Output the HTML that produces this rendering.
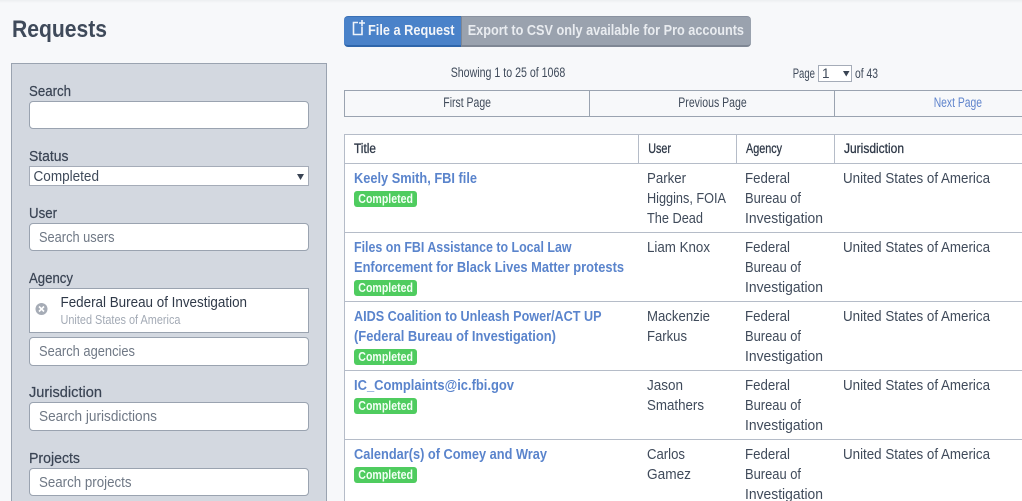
<!DOCTYPE html>
<html><head><meta charset="utf-8"><title>Requests</title>
<style>
html,body{margin:0;padding:0;width:1022px;height:501px;overflow:hidden;background:#f7f8fa}
body{position:relative;font-family:"Liberation Sans",sans-serif}
.b{position:absolute;box-sizing:border-box}
.in{left:29px;width:280px;background:#fff;border:1px solid #9aa3b0;border-radius:4px}
.bd{left:354px;width:63px;height:16px;background:#4fcc5f;border-radius:3px}
svg.t{position:absolute;left:0;top:0}
text{font-family:"Liberation Sans",sans-serif;font-size:14.5px;fill:#3f4a5a}
.lb{font-size:14.5px;fill:#3a4454;stroke:#3a4454;stroke-width:.2}
.ph{font-size:14.5px;fill:#6f7885}
.sm{font-size:13.5px;fill:#3f4a5a}
.th{font-size:13.5px;fill:#2f3948;stroke:#2f3948;stroke-width:.3}
.a{font-size:14.5px;font-weight:bold;fill:#5a84cc}
.c{font-size:12.5px;font-weight:bold;fill:#f2fff4}
.w{font-size:14.5px;font-weight:bold;fill:#f3f5f9}
</style></head><body>
<div class="b" style="left:0;top:0;width:1022px;height:3px;background:linear-gradient(#eceef1,#f7f8fa)"></div>

<div class="b" style="left:11px;top:63px;width:316px;height:450px;background:#d3d8e0;border:1px solid #9aa3b0"></div>
<div class="b in" style="top:101px;height:28px"></div>
<div class="b" style="left:29px;top:166px;width:280px;height:20px;background:#fff;border:1px solid #a5acb8"></div>
<div class="b in" style="top:223px;height:28px"></div>
<div class="b" style="left:29px;top:288px;width:280px;height:45px;background:#fff;border:1px solid #9aa3b0"></div>
<div class="b in" style="top:337px;height:29px"></div>
<div class="b in" style="top:402px;height:29px"></div>
<div class="b in" style="top:468px;height:28px"></div>

<div class="b" style="left:344px;top:16px;width:118px;height:31px;background:#4a82c9;border-bottom:2px solid #2f66ab;border-top:1px solid #3a70b5;border-radius:4px 0 0 4px"></div>
<div class="b" style="left:461px;top:16px;width:290px;height:31px;background:#9aa2ae;border-bottom:2px solid #7f8794;border-top:1px solid #8a92a0;border-left:1px solid #7f8794;border-radius:0 4px 4px 0"></div>

<div class="b" style="left:818px;top:65px;width:34px;height:17px;background:#fff;border:1px solid #a5acb8"></div>

<div class="b" style="left:344px;top:90px;width:760px;height:27px;border:1px solid #9aa3b0;background:#f7f8fa"></div>
<div class="b" style="left:589px;top:90px;width:1px;height:27px;background:#9aa3b0"></div>
<div class="b" style="left:834px;top:90px;width:1px;height:27px;background:#9aa3b0"></div>

<div class="b" style="left:344px;top:134px;width:760px;height:380px;background:#fff;border:1px solid #b5bcc8"></div>
<div class="b" style="left:344px;top:163px;width:760px;height:1px;background:#b5bcc8"></div>
<div class="b" style="left:344px;top:232px;width:760px;height:1px;background:#b5bcc8"></div>
<div class="b" style="left:344px;top:301px;width:760px;height:1px;background:#b5bcc8"></div>
<div class="b" style="left:344px;top:370px;width:760px;height:1px;background:#b5bcc8"></div>
<div class="b" style="left:344px;top:439px;width:760px;height:1px;background:#b5bcc8"></div>
<div class="b" style="left:638px;top:134px;width:1px;height:29px;background:#b5bcc8"></div>
<div class="b" style="left:736px;top:134px;width:1px;height:29px;background:#b5bcc8"></div>
<div class="b" style="left:834px;top:134px;width:1px;height:29px;background:#b5bcc8"></div>

<div class="b bd" style="top:191px"></div>
<div class="b bd" style="top:280px"></div>
<div class="b bd" style="top:349px"></div>
<div class="b bd" style="top:398px"></div>
<div class="b bd" style="top:467px"></div>

<svg class="t" width="1022" height="501" viewBox="0 0 1022 501">
<text x="12" y="37" textLength="95" lengthAdjust="spacingAndGlyphs" style="font-size:24px;font-weight:bold;fill:#3f4a5a">Requests</text>

<text class="lb" x="29" y="96" textLength="42" lengthAdjust="spacingAndGlyphs">Search</text>
<text class="lb" x="29" y="161" textLength="39.5" lengthAdjust="spacingAndGlyphs">Status</text>
<text class="lb" x="29" y="218" textLength="28" lengthAdjust="spacingAndGlyphs">User</text>
<text class="lb" x="29" y="283" textLength="44" lengthAdjust="spacingAndGlyphs">Agency</text>
<text class="lb" x="29" y="397" textLength="73" lengthAdjust="spacingAndGlyphs">Jurisdiction</text>
<text class="lb" x="29" y="463" textLength="51" lengthAdjust="spacingAndGlyphs">Projects</text>

<text x="33.5" y="181" textLength="65.5" lengthAdjust="spacingAndGlyphs">Completed</text>
<path d="M297 174h7l-3.500 6z" fill="#3a4454"/>
<text class="ph" x="39" y="242" textLength="75.500" lengthAdjust="spacingAndGlyphs">Search users</text>
<text class="ph" x="39" y="356" textLength="96" lengthAdjust="spacingAndGlyphs">Search agencies</text>
<text class="ph" x="39" y="421" textLength="118" lengthAdjust="spacingAndGlyphs">Search jurisdictions</text>
<text class="ph" x="39" y="487" textLength="92.500" lengthAdjust="spacingAndGlyphs">Search projects</text>

<circle cx="41.500" cy="309" r="6" fill="#a6acb6"/>
<path d="M39 306.500l5 5M44 306.500l-5 5" stroke="#fff" stroke-width="1.600"/>
<text x="60.500" y="307" textLength="186.500" lengthAdjust="spacingAndGlyphs" style="fill:#2f3948">Federal Bureau of Investigation</text>
<text x="60.500" y="324" textLength="120" lengthAdjust="spacingAndGlyphs" style="font-size:12.500px;fill:#a3aab5">United States of America</text>

<path d="M358 22.500h-4.500v12h8.500v-8" fill="none" stroke="#eef3fa" stroke-width="1.600"/>
<path d="M362 20v6M359 23h6" fill="none" stroke="#eef3fa" stroke-width="1.600"/>
<text class="w" x="368" y="35" textLength="86.500" lengthAdjust="spacingAndGlyphs">File a Request</text>
<text class="w" x="467.700" y="35" textLength="276.300" lengthAdjust="spacingAndGlyphs" style="fill:#e9ecf0">Export to CSV only available for Pro accounts</text>

<text class="sm" x="450.700" y="77" textLength="114.600" lengthAdjust="spacingAndGlyphs">Showing 1 to 25 of 1068</text>
<text class="sm" x="792.700" y="78" textLength="22.300" lengthAdjust="spacingAndGlyphs">Page</text>
<text class="sm" x="822" y="78">1</text>
<path d="M843 71h6.500l-3.250 5.500z" fill="#3a4454"/>
<text class="sm" x="855" y="78" textLength="23" lengthAdjust="spacingAndGlyphs">of 43</text>

<text class="sm" x="443.300" y="107" textLength="47.700" lengthAdjust="spacingAndGlyphs">First Page</text>
<text class="sm" x="678.300" y="107" textLength="68.400" lengthAdjust="spacingAndGlyphs">Previous Page</text>
<text class="sm" x="933.700" y="107" textLength="48.300" lengthAdjust="spacingAndGlyphs" style="fill:#5f84cc">Next Page</text>

<text class="th" x="354" y="153" textLength="22" lengthAdjust="spacingAndGlyphs">Title</text>
<text class="th" x="648.300" y="153" textLength="22.700" lengthAdjust="spacingAndGlyphs">User</text>
<text class="th" x="746" y="153" textLength="36" lengthAdjust="spacingAndGlyphs">Agency</text>
<text class="th" x="844" y="153" textLength="60" lengthAdjust="spacingAndGlyphs">Jurisdiction</text>

<text class="a" x="354" y="183" textLength="123" lengthAdjust="spacingAndGlyphs">Keely Smith, FBI file</text>
<text class="a" x="354" y="252" textLength="217.500" lengthAdjust="spacingAndGlyphs">Files on FBI Assistance to Local Law</text>
<text class="a" x="354" y="272" textLength="270" lengthAdjust="spacingAndGlyphs">Enforcement for Black Lives Matter protests</text>
<text class="a" x="354" y="321" textLength="247.500" lengthAdjust="spacingAndGlyphs">AIDS Coalition to Unleash Power/ACT UP</text>
<text class="a" x="354" y="341" textLength="202" lengthAdjust="spacingAndGlyphs">(Federal Bureau of Investigation)</text>
<text class="a" x="354" y="390" textLength="160" lengthAdjust="spacingAndGlyphs">IC_Complaints@ic.fbi.gov</text>
<text class="a" x="354" y="459" textLength="193" lengthAdjust="spacingAndGlyphs">Calendar(s) of Comey and Wray</text>

<text class="c" x="358.300" y="203" textLength="54.700" lengthAdjust="spacingAndGlyphs">Completed</text>
<text class="c" x="358.300" y="292" textLength="54.700" lengthAdjust="spacingAndGlyphs">Completed</text>
<text class="c" x="358.300" y="361" textLength="54.700" lengthAdjust="spacingAndGlyphs">Completed</text>
<text class="c" x="358.300" y="410" textLength="54.700" lengthAdjust="spacingAndGlyphs">Completed</text>
<text class="c" x="358.300" y="479" textLength="54.700" lengthAdjust="spacingAndGlyphs">Completed</text>

<text x="647" y="183" textLength="39" lengthAdjust="spacingAndGlyphs">Parker</text>
<text x="647" y="203" textLength="79" lengthAdjust="spacingAndGlyphs">Higgins, FOIA</text>
<text x="647" y="223" textLength="56" lengthAdjust="spacingAndGlyphs">The Dead</text>
<text x="647" y="252" textLength="63" lengthAdjust="spacingAndGlyphs">Liam Knox</text>
<text x="647" y="321" textLength="63" lengthAdjust="spacingAndGlyphs">Mackenzie</text>
<text x="647" y="341" textLength="40" lengthAdjust="spacingAndGlyphs">Farkus</text>
<text x="647" y="390" textLength="36" lengthAdjust="spacingAndGlyphs">Jason</text>
<text x="647" y="410" textLength="57" lengthAdjust="spacingAndGlyphs">Smathers</text>
<text x="647" y="459" textLength="38" lengthAdjust="spacingAndGlyphs">Carlos</text>
<text x="647" y="479" textLength="44" lengthAdjust="spacingAndGlyphs">Gamez</text>

<text x="745" y="183" textLength="45" lengthAdjust="spacingAndGlyphs">Federal</text>
<text x="745" y="203" textLength="56" lengthAdjust="spacingAndGlyphs">Bureau of</text>
<text x="745" y="223" textLength="78" lengthAdjust="spacingAndGlyphs">Investigation</text>
<text x="745" y="252" textLength="45" lengthAdjust="spacingAndGlyphs">Federal</text>
<text x="745" y="272" textLength="56" lengthAdjust="spacingAndGlyphs">Bureau of</text>
<text x="745" y="292" textLength="78" lengthAdjust="spacingAndGlyphs">Investigation</text>
<text x="745" y="321" textLength="45" lengthAdjust="spacingAndGlyphs">Federal</text>
<text x="745" y="341" textLength="56" lengthAdjust="spacingAndGlyphs">Bureau of</text>
<text x="745" y="361" textLength="78" lengthAdjust="spacingAndGlyphs">Investigation</text>
<text x="745" y="390" textLength="45" lengthAdjust="spacingAndGlyphs">Federal</text>
<text x="745" y="410" textLength="56" lengthAdjust="spacingAndGlyphs">Bureau of</text>
<text x="745" y="430" textLength="78" lengthAdjust="spacingAndGlyphs">Investigation</text>
<text x="745" y="459" textLength="45" lengthAdjust="spacingAndGlyphs">Federal</text>
<text x="745" y="479" textLength="56" lengthAdjust="spacingAndGlyphs">Bureau of</text>
<text x="745" y="499" textLength="78" lengthAdjust="spacingAndGlyphs">Investigation</text>

<text x="843" y="183" textLength="147" lengthAdjust="spacingAndGlyphs">United States of America</text>
<text x="843" y="252" textLength="147" lengthAdjust="spacingAndGlyphs">United States of America</text>
<text x="843" y="321" textLength="147" lengthAdjust="spacingAndGlyphs">United States of America</text>
<text x="843" y="390" textLength="147" lengthAdjust="spacingAndGlyphs">United States of America</text>
<text x="843" y="459" textLength="147" lengthAdjust="spacingAndGlyphs">United States of America</text>
</svg>
</body></html>
